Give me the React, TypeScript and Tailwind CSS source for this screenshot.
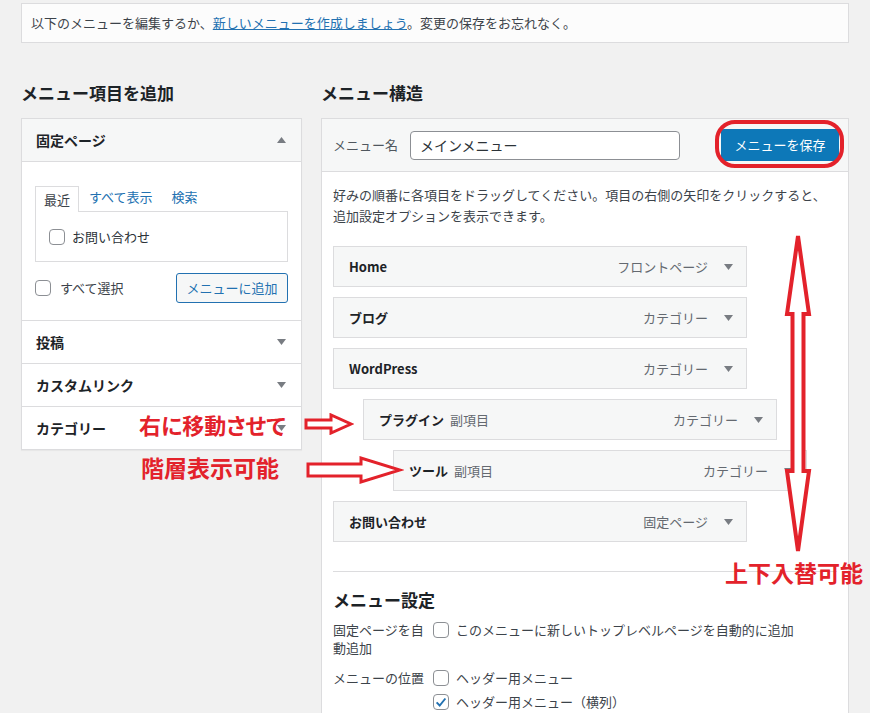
import React from 'react'

const RED = '#e3222b'

function Tri({ up }: { up?: boolean }) {
  return (
    <svg width="9" height="6" viewBox="0 0 9 6" className="shrink-0">
      <path d={up ? 'M0 6 L4.5 0 L9 6Z' : 'M0 0 L9 0 L4.5 6Z'} fill="#787c82" />
    </svg>
  )
}

function Box({ checked }: { checked?: boolean }) {
  return (
    <span className="w-4 h-4 shrink-0 rounded-[4px] border border-[#8c8f94] bg-white flex items-center justify-center">
      {checked && (
        <svg width="14" height="14" viewBox="0 0 16 16">
          <path d="M3 8.5 L6.5 12 L13 4" stroke="#2271b1" strokeWidth="2.2" fill="none" />
        </svg>
      )}
    </span>
  )
}

const items = [
  { title: 'Home', type: 'フロントページ', indent: 'ml-0' },
  { title: 'ブログ', type: 'カテゴリー', indent: 'ml-0' },
  { title: 'WordPress', type: 'カテゴリー', indent: 'ml-0' },
  { title: 'プラグイン', type: 'カテゴリー', indent: 'ml-[30px]', sub: true },
  { title: 'ツール', type: 'カテゴリー', indent: 'ml-[60px]', sub: true },
  { title: 'お問い合わせ', type: '固定ページ', indent: 'ml-0' },
]

export default function App() {
  return (
    <div className="relative w-[870px] h-[713px] overflow-hidden bg-[#f1f1f1] font-['Noto_Sans_CJK_JP',sans-serif] text-[13px] text-[#3c434a]">
      {/* Notice */}
      <div className="ml-[21px] mt-[3px] w-[828px] h-[40px] bg-[#fcfcfc] border border-[#dcdcde] flex items-center pl-[9px]">
        <span>
          以下のメニューを編集するか、
          <a className="text-[#2271b1] underline">新しいメニューを作成しましょう</a>
          。変更の保存をお忘れなく。
        </span>
      </div>

      <div className="flex mt-[38px] ml-[21px] gap-[19px]">
        {/* Left column */}
        <div className="w-[281px]">
          <h2 className="text-[17px] font-bold leading-[24px] text-[#1d2327] mb-[13px]">メニュー項目を追加</h2>
          <div className="border border-[#dcdcde] bg-white shadow-[0_1px_1px_rgba(0,0,0,0.04)]">
            <div className="h-[43px] bg-[#f6f7f7] border-b border-[#dcdcde] flex items-center justify-between pl-[14px] pr-[15px]">
              <span className="text-[14px] font-semibold text-[#1d2327]">固定ページ</span>
              <Tri up />
            </div>
            <div className="pt-[24px] px-[13px] pb-[17px]">
              <div className="flex items-end h-[25px]">
                <div className="h-[26px] px-[8px] border border-b-0 border-[#dcdcde] bg-white flex items-center relative z-10 -mb-px">
                  最近
                </div>
                <span className="ml-[10px] mb-[5px] text-[#2271b1]">すべて表示</span>
                <span className="ml-[19px] mb-[5px] text-[#2271b1]">検索</span>
              </div>
              <div className="h-[51px] border border-[#dcdcde] flex items-center pl-[13px] gap-[7px]">
                <Box />
                <span className="text-[#2c3338]">お問い合わせ</span>
              </div>
              <div className="mt-[11px] flex items-center justify-between">
                <div className="flex items-center gap-[9px]">
                  <Box />
                  <span>すべて選択</span>
                </div>
                <button className="w-[112px] h-[30px] border border-[#2271b1] rounded-[3px] bg-[#f6f7f7] text-[#2271b1] text-[13px]">
                  メニューに追加
                </button>
              </div>
            </div>
            {['投稿', 'カスタムリンク', 'カテゴリー'].map(t => (
              <div key={t} className="h-[43px] border-t border-[#dcdcde] flex items-center justify-between pl-[14px] pr-[15px]">
                <span className="text-[14px] font-semibold text-[#1d2327]">{t}</span>
                <Tri />
              </div>
            ))}
          </div>
        </div>

        {/* Right column */}
        <div className="w-[528px]">
          <h2 className="text-[17px] font-bold leading-[24px] text-[#1d2327] mb-[13px]">メニュー構造</h2>
          <div className="h-[620px] border border-[#dcdcde] bg-white">
            <div className="h-[53px] bg-[#f6f7f7] border-b border-[#dcdcde] flex items-center pl-[11px] pr-[9px]">
              <span className="text-[#50575e]">メニュー名</span>
              <div className="ml-[12px] w-[270px] h-[29px] border border-[#8c8f94] rounded-[4px] bg-white flex items-center pl-[9px] text-[14px] text-[#2c3338]">
                メインメニュー
              </div>
              <button className="ml-auto w-[118px] h-[32px] rounded-[3px] bg-[#0d78b8] text-white text-[13px]">
                メニューを保存
              </button>
            </div>
            <div className="px-[11px] pt-[12px]">
              <p className="leading-[21px]">
                好みの順番に各項目をドラッグしてください。項目の右側の矢印をクリックすると、
                <br />
                追加設定オプションを表示できます。
              </p>
              <div className="mt-[20px] flex flex-col gap-[10px]">
                {items.map(it => (
                  <div
                    key={it.title}
                    className={`${it.indent} w-[414px] h-[41px] bg-[#f6f7f7] border border-[#dcdcde] flex items-center pl-[15px] pr-[13px]`}
                  >
                    <span className="font-semibold text-[#1d2327]">{it.title}</span>
                    {it.sub && <span className="ml-[6px] text-[#646970]">副項目</span>}
                    <span className="ml-auto mr-[16px] text-[#646970]">{it.type}</span>
                    <Tri />
                  </div>
                ))}
              </div>
              <div className="mt-[29px] border-t border-[#dcdcde]" />
              <h3 className="mt-[16px] text-[17px] font-bold leading-[24px] text-[#1d2327]">メニュー設定</h3>
              <div className="mt-[9px] flex">
                <div className="w-[100px] leading-[18px]">固定ページを自動追加</div>
                <div className="flex items-start gap-[7px] leading-[18px]">
                  <span className="mt-px">
                    <Box />
                  </span>
                  <span>このメニューに新しいトップレベルページを自動的に追加</span>
                </div>
              </div>
              <div className="mt-[9px] flex">
                <div className="w-[100px] leading-[24px]">メニューの位置</div>
                <div className="flex flex-col">
                  <div className="h-[24px] flex items-center gap-[7px]">
                    <Box />
                    <span>ヘッダー用メニュー</span>
                  </div>
                  <div className="h-[24px] flex items-center gap-[7px]">
                    <Box checked />
                    <span>ヘッダー用メニュー（横列）</span>
                  </div>
                </div>
              </div>
            </div>
          </div>
        </div>
      </div>

      {/* Annotations */}
      <div className="absolute left-[715px] top-[120px] w-[129px] h-[48px] border-[4px] border-[#e3222b] rounded-[20px]" />

      <div className="absolute left-[139px] top-[413px] text-[22px] font-bold leading-none text-[#e3222b] [font-feature-settings:'palt']">
        右に移動させて
      </div>
      <div className="absolute left-[141px] top-[456px] text-[23px] font-bold leading-none text-[#e3222b]">
        階層表示可能
      </div>
      <div className="absolute left-[725px] top-[561px] text-[23px] font-bold leading-none text-[#e3222b]">
        上下入替可能
      </div>

      <svg className="absolute left-[304px] top-[413px]" width="50" height="22" viewBox="0 0 50 22">
        <path d="M2 7 L27 7 L27 2 L47 11 L27 20 L27 15 L2 15 Z" fill="white" stroke={RED} strokeWidth="3" strokeLinejoin="miter" />
      </svg>
      <svg className="absolute left-[306px] top-[456px]" width="98" height="28" viewBox="0 0 98 28">
        <path d="M2 8 L55 8 L55 2 L94 14 L55 26 L55 20 L2 20 Z" fill="white" stroke={RED} strokeWidth="3" strokeLinejoin="miter" />
      </svg>
      <svg className="absolute left-[783px] top-[233px]" width="30" height="322" viewBox="0 0 30 322">
        <path
          d="M15 3 L26 81 L20.5 81 L20.5 238 L26 238 L15 318 L4 238 L9.5 238 L9.5 81 L4 81 Z"
          fill="white"
          stroke={RED}
          strokeWidth="4"
          strokeLinejoin="miter"
        />
      </svg>
    </div>
  )
}
